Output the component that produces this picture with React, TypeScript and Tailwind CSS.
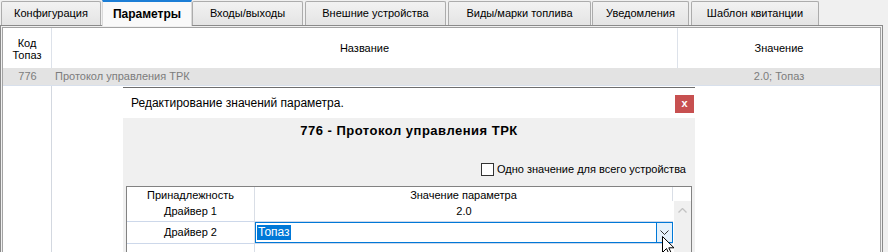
const tabs = [
  { label: "Конфигурация", cls: "w-[100px]" },
  { label: "Параметры", cls: "ml-[1px] w-[90px]", active: true },
  { label: "Входы/выходы", cls: "w-[111px]" },
  { label: "Внешние устройства", cls: "ml-[2px] w-[141px]" },
  { label: "Виды/марки топлива", cls: "ml-[2px] w-[143px]" },
  { label: "Уведомления", cls: "ml-[1px] w-[97px]" },
  { label: "Шаблон квитанции", cls: "ml-[2px] w-[128px]" },
];

function Tabs() {
  return (
    <div className="flex h-[25px] items-end pl-[1px]">
      {tabs.map((t) =>
        t.active ? (
          <div
            key={t.label}
            className={`${t.cls} relative z-10 -mb-[1px] flex h-[26px] items-center justify-center border-x border-[#d9d9d9] border-t-2 border-t-[#1c7ed6] bg-[#f9f9f9] text-[12px] font-bold text-black`}
          >
            {t.label}
          </div>
        ) : (
          <div
            key={t.label}
            className={`${t.cls} flex h-[24px] items-center justify-center rounded-t-[2px] border border-b-0 border-[#acacac] bg-gradient-to-b from-[#f2f2f2] to-[#e4e4e4] text-[11px] text-black`}
          >
            {t.label}
          </div>
        )
      )}
    </div>
  );
}

function ParamGrid() {
  return (
    <div className="h-[227px] w-[883px] border-x border-t border-[#8a8a8a] p-[1px] pb-0">
      <div className="h-full border-x border-t border-[#a3a3a3] bg-white">
        {/* Header */}
        <div className="flex h-[40px] text-[11px] text-black">
          <div className="flex w-[49px] items-center justify-center border-r border-[#dde2ea] pt-[2px] text-center leading-[12px]">
            Код
            <br />
            Топаз
          </div>
          <div className="flex w-[626px] items-center justify-center border-r border-[#dde2ea]">
            Название
          </div>
          <div className="flex flex-1 items-center justify-center">Значение</div>
        </div>
        {/* Row */}
        <div className="flex h-[18px] border-b border-[#d8e0ec] bg-[#e3e3e3] text-[11px] text-[#7c7c7c]">
          <div className="flex w-[49px] items-center justify-center">776</div>
          <div className="flex w-[626px] items-center pl-[3px]">Протокол управления ТРК</div>
          <div className="flex flex-1 items-center justify-center">2.0; Топаз</div>
        </div>
        <div className="flex h-[170px]">
          <div className="w-[49px] border-r border-[#d3d8e0]" />
        </div>
      </div>
    </div>
  );
}

function Cursor() {
  return (
    <svg className="absolute left-[662px] top-[236px]" width="13" height="20" viewBox="0 0 13 20">
      <path
        d="M0.5 0.5 L0.5 16.5 L4.5 12.5 L7.2 18.5 L9.5 17.5 L6.8 11.8 L12 11.8 Z"
        fill="white"
        stroke="black"
        strokeWidth="1"
        strokeLinejoin="miter"
      />
    </svg>
  );
}

function EditDialog() {
  return (
    <div className="absolute left-[123px] top-[87px] flex h-[165px] w-[572px] flex-col overflow-hidden border-t border-[#6e6e6e] bg-[#f0f0f0]">
      {/* Title bar */}
      <div className="flex h-[30px] shrink-0 items-center justify-between bg-white pl-[8px] pr-[1px]">
        <span className="text-[12px] text-black">Редактирование значений параметра.</span>
        <div className="mt-[1px] flex h-[18px] w-[19px] items-center justify-center bg-[#c75050] text-[11px] font-bold leading-none text-white">
          x
        </div>
      </div>
      {/* Body */}
      <div className="flex shrink-0 flex-col">
        <div className="mt-[6px] text-center text-[13px] font-bold leading-[14px] tracking-[0.5px] text-black">
          776 - Протокол управления ТРК
        </div>
        <div className="mt-[24px] flex h-[14px] items-center justify-end pr-[9px]">
          <span className="h-[13px] w-[13px] border border-[#333] bg-white" />
          <span className="ml-[3px] text-[11px] leading-[14px] text-black">
            Одно значение для всего устройства
          </span>
        </div>
        <div className="mx-[3px] mt-[10px] h-[80px] border-x border-t border-[#828282] bg-white text-[11px] text-black">
          {/* Header */}
          <div className="flex h-[14px]">
            <div className="flex w-[128px] items-center justify-center border-r border-[#d9dee6] pt-[2px]">
              Принадлежность
            </div>
            <div className="flex w-[418px] items-center justify-center border-r border-[#d9dee6] pt-[2px]">
              Значение параметра
            </div>
          </div>
          <div className="flex">
            <div className="w-[547px]">
              <div className="flex h-[21px] border-b border-[#cdd8ea]">
                <div className="flex w-[128px] items-center justify-center border-r border-[#d9dee6]">
                  Драйвер 1
                </div>
                <div className="flex w-[418px] items-center justify-center">2.0</div>
              </div>
              <div className="flex h-[22px] border-b border-[#cdd8ea]">
                <div className="flex w-[128px] items-center justify-center border-r border-[#d9dee6]">
                  Драйвер 2
                </div>
                <div className="flex h-[21px] w-[418px] items-center border border-[#0078d7]">
                  <span className="ml-[1px] bg-[#0078d7] px-[1px] text-[12px] leading-[15px] text-white">
                    Топаз
                  </span>
                  <div className="ml-auto flex h-full w-[16px] items-center justify-center border-l border-[#0078d7] bg-[#e5f1fb]">
                    <svg width="9" height="5" viewBox="0 0 9 5">
                      <path d="M0.5 0.5 L4.5 4.5 L8.5 0.5" fill="none" stroke="#333" strokeWidth="1" />
                    </svg>
                  </div>
                </div>
              </div>
              <div className="flex h-[30px]">
                <div className="w-[128px] border-r border-[#d9dee6]" />
              </div>
            </div>
            <div className="ml-[1px] flex h-[80px] w-[17px] justify-center bg-[#f0f0f0] pt-[6px]">
              <svg width="9" height="5" viewBox="0 0 9 5" className="mt-[1px]">
                <path d="M0.5 4.5 L4.5 0.5 L8.5 4.5" fill="none" stroke="#c2c2c2" strokeWidth="1.3" />
              </svg>
            </div>
          </div>
        </div>
      </div>
    </div>
  );
}

export default function App() {
  return (
    <div className="relative h-[252px] w-[888px] overflow-hidden bg-[#f0f0f0] font-['Liberation_Sans',Arial,sans-serif]">
      <Tabs />
      <ParamGrid />
      <EditDialog />
      <Cursor />
    </div>
  );
}
